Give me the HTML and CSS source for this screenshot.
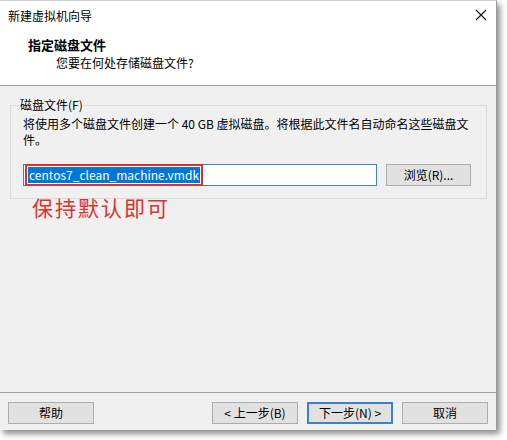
FILE: index.html
```html
<!DOCTYPE html>
<html lang="zh">
<head>
<meta charset="utf-8">
<title>新建虚拟机向导</title>
<link rel="stylesheet" href="styles.css">
</head>
<body>
<div class="window">
  <div class="titlebar">
    <span class="title">新建虚拟机向导</span>
    <svg class="close" width="12" height="12" viewBox="0 0 12 12"><path d="M1 1 L11 11 M11 1 L1 11" stroke="#111" stroke-width="1.1" fill="none"/></svg>
  </div>
  <div class="header">
    <div class="h-title">指定磁盘文件</div>
    <div class="h-sub">您要在何处存储磁盘文件?</div>
  </div>
  <div class="content">
    <fieldset class="group">
      <legend>磁盘文件(F)</legend>
      <p class="desc">将使用多个磁盘文件创建一个 40 GB 虚拟磁盘。将根据此文件名自动命名这些磁盘文<br>件。</p>
      <div class="row">
        <div class="input"><span class="sel">centos7_clean_machine.vmdk</span></div>
        <button class="btn browse">浏览(R)...</button>
      </div>
    </fieldset>
    <div class="note">保持默认即可</div>
  </div>
  <div class="footer">
    <button class="btn">帮助</button>
    <div class="spacer"></div>
    <button class="btn">&lt; 上一步(B)</button>
    <button class="btn primary">下一步(N) &gt;</button>
    <button class="btn">取消</button>
  </div>
</div>
</body>
</html>
```

FILE: styles.css
```css
* { box-sizing: border-box; }
html, body { margin: 0; padding: 0; background: #ffffff; }
body {
  font-family: "Noto Sans CJK SC", "Noto Sans", sans-serif;
  font-size: 12px;
  color: #000;
  width: 507px;
  height: 440px;
  overflow: hidden;
}
.window {
  width: 497px;
  height: 430px;
  display: flex;
  flex-direction: column;
  background: #f0f0f0;
  border-top: 1px solid #cfcfcf;
  border-right: 1px solid #9a9a9a;
  box-shadow: 3px 4px 6px rgba(0,0,0,0.45);
}
.titlebar {
  height: 29px;
  background: #fff;
  display: flex;
  align-items: center;
  justify-content: space-between;
  padding: 0 9px 0 8px;
}
.title { line-height: 16px; }
.close { display: block; margin-top: -2px; }
.header {
  background: #fff;
  height: 56px;
  padding: 6px 0 0 28px;
  border-bottom: 1px solid #a0a0a0;
}
.h-title {
  font-size: 13px;
  font-weight: bold;
  line-height: 18px;
}
.h-sub {
  padding-left: 28px;
  line-height: 17px;
}
.content {
  flex: 1;
  padding: 11px 9px 0 10px;
}
.group {
  margin: 0;
  border: 1px solid #dcdcdc;
  padding: 3px 10px 12px 12px;
}
.group legend {
  padding: 0 1px;
  margin-left: -4px;
  line-height: 16px;
}
.desc {
  margin: 0;
  line-height: 16px;
  white-space: nowrap;
}
.row {
  display: flex;
  gap: 9px;
  margin-top: 16px;
}
.input {
  width: 354px;
  height: 22px;
  background: #fff;
  border: 1px solid #3f7fcf;
  padding: 2px 0 0 4px;
  line-height: 16px;
}
.sel {
  display: inline-block;
  background: #0078d7;
  color: #fff;
  line-height: 16px;
  padding: 0 1px;
  outline: 2px solid #d9332f;
  outline-offset: 1px;
}
.btn {
  font-family: inherit;
  font-size: 12px;
  width: 86px;
  height: 22px;
  background: #e1e1e1;
  border: 1px solid #adadad;
  color: #000;
  padding: 0;
  line-height: 18px;
}
.browse { width: 85px; }
.note {
  margin: -3px 0 0 22px;
  font-size: 21px;
  line-height: 22px;
  letter-spacing: 2px;
  color: #e0302c;
}
.footer {
  border-top: 1px solid #a0a0a0;
  height: 38px;
  padding: 9px 8px 0 8px;
  display: flex;
  gap: 9px;
}
.spacer { flex: 1; }
.primary { border: 2px solid #3c80d4; }
```
